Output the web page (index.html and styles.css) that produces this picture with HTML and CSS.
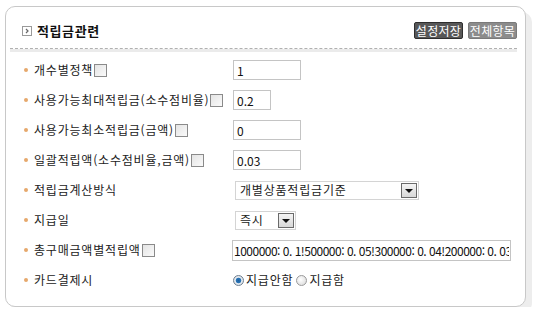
FILE: index.html
```html
<!DOCTYPE html>
<html lang="ko">
<head>
    <meta charset="UTF-8">
    <title>적립금관련</title>
    <link rel="stylesheet" href="styles.css">
</head>
<body>
<div class="panel">
    <!-- 제목 -->
    <div class="panel-head">
        <span class="head-icon">
            <svg width="10" height="10" viewBox="0 0 10 10"><rect x="0.5" y="0.5" width="9" height="9" fill="#fff" stroke="#9a9a9a"/><path d="M4 3 L6 5 L4 7" fill="none" stroke="#666" stroke-width="1.2"/></svg>
        </span>
        <span class="head-title">적립금관련</span>
        <span class="head-btns">
            <button class="btn btn-dark">설정저장</button>
            <button class="btn btn-gray">전체항목</button>
        </span>
    </div>
    <div class="head-band"></div>

    <!-- 항목 -->
    <div class="rows">
        <div class="row">
            <span class="dot"></span>
            <span class="label">개수별정책<span class="chk"></span></span>
            <span class="field"><input class="txt w68" type="text" value="1"></span>
        </div>
        <div class="row">
            <span class="dot"></span>
            <span class="label">사용가능최대적립금(소수점비율)<span class="chk"></span></span>
            <span class="field"><input class="txt w38" type="text" value="0.2"></span>
        </div>
        <div class="row">
            <span class="dot"></span>
            <span class="label">사용가능최소적립금(금액)<span class="chk"></span></span>
            <span class="field"><input class="txt w68" type="text" value="0"></span>
        </div>
        <div class="row">
            <span class="dot"></span>
            <span class="label">일괄적립액(소수점비율,금액)<span class="chk"></span></span>
            <span class="field"><input class="txt w68" type="text" value="0.03"></span>
        </div>
        <div class="row">
            <span class="dot"></span>
            <span class="label">적립금계산방식</span>
            <span class="field">
                <span class="sel w184"><span class="sel-text">개별상품적립금기준</span><span class="sel-btn"><span class="arrow"></span></span></span>
            </span>
        </div>
        <div class="row">
            <span class="dot"></span>
            <span class="label">지급일</span>
            <span class="field">
                <span class="sel w61"><span class="sel-text">즉시</span><span class="sel-btn"><span class="arrow"></span></span></span>
            </span>
        </div>
        <div class="row">
            <span class="dot"></span>
            <span class="label">총구매금액별적립액<span class="chk"></span></span>
            <span class="field"><input class="txt wide" type="text" value="1000000: 0. 1!500000: 0. 05!300000: 0. 04!200000: 0. 03!100000: 0. 02"></span>
        </div>
        <div class="row">
            <span class="dot"></span>
            <span class="label">카드결제시</span>
            <span class="field radios">
                <label class="radio"><span class="rd on"></span>지급안함</label>
                <label class="radio"><span class="rd"></span>지급함</label>
            </span>
        </div>
    </div>
</div>
</body>
</html>
```

FILE: styles.css
```css
body {
    margin: 0;
    background: #fff;
    font-family: "Noto Sans CJK KR", "DejaVu Sans", sans-serif;
    font-size: 12px;
    color: #333;
}
.panel {
    margin: 6px 0 0 5px;
    width: 519px;
    height: 299px;
    border: 1px solid #c8c8c8;
    border-radius: 10px;
    box-shadow: 6px 6px 0 #ededed;
    background: #fff;
}
.panel-head {
    display: flex;
    align-items: center;
    margin: 0 8px 0 4px;
    padding: 15px 0 9px 12px;
    border-bottom: 1px dashed #b0b0b0;
    height: 17px;
}
.head-icon {
    width: 10px;
    height: 10px;
    display: flex;
    margin-top: 1px;
}
.head-title {
    margin-left: 5px;
    font-size: 13px;
    font-weight: bold;
    color: #111;
    line-height: 17px;
    letter-spacing: 0.6px;
}
.head-btns {
    margin-left: auto;
    display: flex;
    gap: 5px;
}
.btn {
    height: 17px;
    width: 49px;
    padding: 0;
    font-family: "Noto Sans CJK KR", sans-serif;
    font-size: 12px;
    line-height: 14px;
    letter-spacing: 0.3px;
    color: #fff;
    border-radius: 2px;
    cursor: pointer;
}
.btn-dark {
    background: #575757;
    border: 1px solid #2e2e2e;
}
.btn-gray {
    background: #8c8c8c;
    border: 1px solid #7a7a7a;
}
.head-band {
    margin: 0 8px 0 4px;
    height: 3px;
    background: #ebebeb;
}
.rows {
    margin-top: 3px;
}
.row {
    display: flex;
    align-items: center;
    height: 30px;
    padding-left: 18px;
}
.dot {
    width: 4px;
    height: 4px;
    border-radius: 50%;
    background: #e6a86c;
    margin-right: 6px;
}
.label {
    width: 199px;
    display: flex;
    align-items: center;
    color: #222;
    line-height: 14px;
    letter-spacing: 0.8px;
}
.chk {
    width: 11px;
    height: 11px;
    border: 1px solid #8a8a8a;
    background: linear-gradient(135deg, #e4e4e4, #fafafa);
    margin-left: 1px;
}
.field {
    display: flex;
    align-items: center;
}
.txt {
    box-sizing: border-box;
    height: 20px;
    border: 1px solid #c4c4c4;
    padding: 0 3px;
    font-family: "Noto Sans CJK KR", sans-serif;
    font-size: 12px;
    color: #111;
    outline: none;
}
.w68 { width: 68px; }
.w38 { width: 38px; }
.wide {
    width: 279px;
    height: 21px;
    margin-left: -1px;
    padding: 0 1px;
    letter-spacing: -0.5px;
}
.sel {
    box-sizing: border-box;
    height: 19px;
    margin-left: 2px;
    border: 1px solid #d4d4d4;
    display: flex;
    align-items: center;
    justify-content: space-between;
    padding: 0 1px 0 4px;
}
.w184 { width: 184px; }
.w61 { width: 61px; }
.sel-text {
    color: #222;
    line-height: 14px;
    letter-spacing: 0.8px;
}
.sel-btn {
    box-sizing: border-box;
    width: 16px;
    height: 15px;
    border: 1px solid #6a6a6a;
    background: linear-gradient(#f4f4f4, #d8d8d8);
    display: flex;
    align-items: center;
    justify-content: center;
}
.arrow {
    width: 0;
    height: 0;
    border-left: 4px solid transparent;
    border-right: 4px solid transparent;
    border-top: 4px solid #111;
    margin-top: 1px;
}
.radios {
    gap: 3px;
}
.radio {
    display: flex;
    align-items: center;
    color: #222;
    line-height: 14px;
    letter-spacing: 0.8px;
}
.rd {
    box-sizing: border-box;
    width: 11px;
    height: 11px;
    border-radius: 50%;
    border: 1px solid #9a9a9a;
    background: radial-gradient(circle at 40% 40%, #fff, #d6d6d6);
    margin-right: 2px;
}
.rd.on {
    border-color: #6f7f90;
    background: radial-gradient(circle, #1f5f9e 0, #2a76b8 2.4px, #e8edf2 3.2px, #c9d0d8 100%);
}
```
